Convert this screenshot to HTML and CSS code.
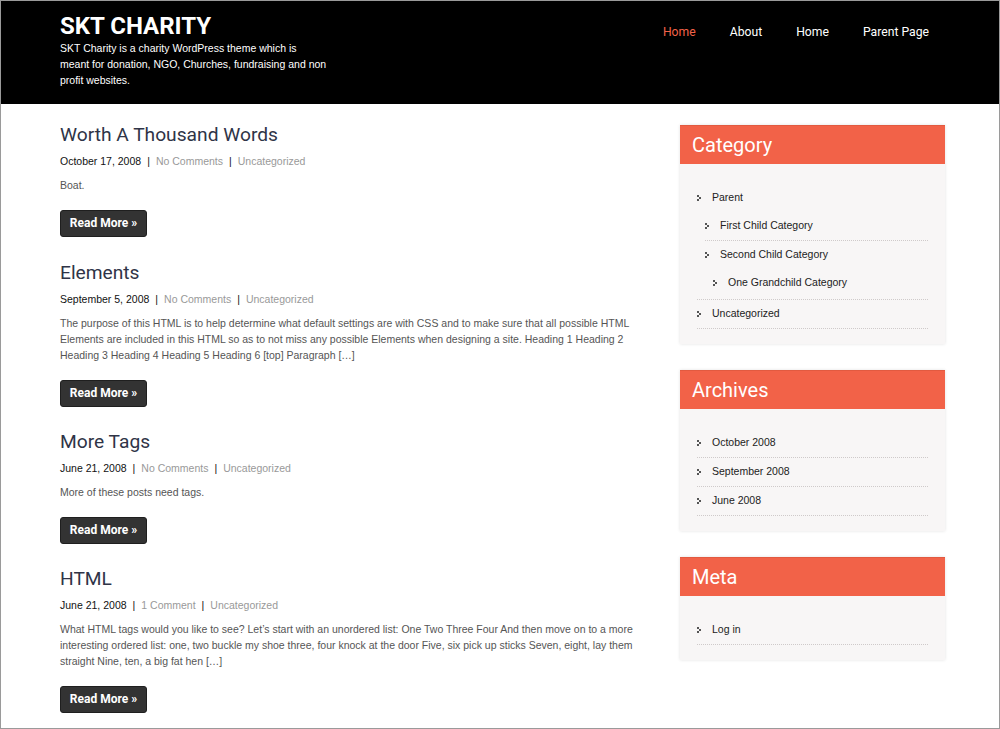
FILE: index.html
```html
<!DOCTYPE html>
<html>
<head>
<meta charset="utf-8">
<title>SKT Charity</title>
<link rel="stylesheet" href="styles.css">
</head>
<body>
<div class="frame">
  <header class="site-header">
    <div class="branding">
      <h1 class="site-title">SKT CHARITY</h1>
      <p class="tagline">SKT Charity is a charity WordPress theme which is meant for donation, NGO, Churches, fundraising and non profit websites.</p>
    </div>
    <nav class="nav">
      <a class="active">Home</a>
      <a>About</a>
      <a>Home</a>
      <a>Parent Page</a>
    </nav>
  </header>

  <div class="content">
    <main class="posts">
      <article class="post">
        <h2 class="post-title">Worth A Thousand Words</h2>
        <div class="meta"><span class="date">October 17, 2008</span><span class="sep">|</span><a>No Comments</a><span class="sep">|</span><a>Uncategorized</a></div>
        <p class="excerpt">Boat.</p>
        <a class="btn">Read More »</a>
      </article>
      <article class="post">
        <h2 class="post-title">Elements</h2>
        <div class="meta"><span class="date">September 5, 2008</span><span class="sep">|</span><a>No Comments</a><span class="sep">|</span><a>Uncategorized</a></div>
        <p class="excerpt">The purpose of this HTML is to help determine what default settings are with CSS and to make sure that all possible HTML Elements are included in this HTML so as to not miss any possible Elements when designing a site. Heading 1 Heading 2 Heading 3 Heading 4 Heading 5 Heading 6 [top] Paragraph […]</p>
        <a class="btn">Read More »</a>
      </article>
      <article class="post">
        <h2 class="post-title">More Tags</h2>
        <div class="meta"><span class="date">June 21, 2008</span><span class="sep">|</span><a>No Comments</a><span class="sep">|</span><a>Uncategorized</a></div>
        <p class="excerpt">More of these posts need tags.</p>
        <a class="btn">Read More »</a>
      </article>
      <article class="post">
        <h2 class="post-title">HTML</h2>
        <div class="meta"><span class="date">June 21, 2008</span><span class="sep">|</span><a>1 Comment</a><span class="sep">|</span><a>Uncategorized</a></div>
        <p class="excerpt">What HTML tags would you like to see? Let’s start with an unordered list: One Two Three Four And then move on to a more interesting ordered list: one, two buckle my shoe three, four knock at the door Five, six pick up sticks Seven, eight, lay them straight Nine, ten, a big fat hen […]</p>
        <a class="btn">Read More »</a>
      </article>
    </main>

    <aside class="sidebar">
      <section class="widget">
        <h3 class="widget-title">Category</h3>
        <ul class="wlist">
          <li><span class="item">Parent</span>
            <ul class="children">
              <li><span class="item">First Child Category</span></li>
              <li><span class="item">Second Child Category</span>
                <ul class="children">
                  <li><span class="item">One Grandchild Category</span></li>
                </ul>
              </li>
            </ul>
          </li>
          <li><span class="item">Uncategorized</span></li>
        </ul>
      </section>
      <section class="widget">
        <h3 class="widget-title">Archives</h3>
        <ul class="wlist">
          <li><span class="item">October 2008</span></li>
          <li><span class="item">September 2008</span></li>
          <li><span class="item">June 2008</span></li>
        </ul>
      </section>
      <section class="widget">
        <h3 class="widget-title">Meta</h3>
        <ul class="wlist">
          <li><span class="item">Log in</span></li>
        </ul>
      </section>
    </aside>
  </div>
</div>
</body>
</html>
```
FILE: styles.css
```css
* { box-sizing: border-box; }
html, body { margin: 0; padding: 0; background: #fff; }
body { font-family: "Liberation Sans", Arial, sans-serif; }

.frame {
  width: 1000px;
  height: 729px;
  border: 1px solid #9a9a9a;
  overflow: hidden;
  background: #fff;
}

.site-header {
  background: #000;
  height: 103px;
  display: flex;
  justify-content: space-between;
  align-items: flex-start;
  padding: 11px 0 0 59px;
}
.site-title {
  margin: 0;
  font-family: Roboto, "Liberation Sans", sans-serif;
  font-weight: 700;
  font-size: 24px;
  line-height: 28px;
  color: #fff;
}
.tagline {
  margin: 0;
  width: 267px;
  color: #fff;
  font-size: 10.5px;
  line-height: 16px;
}
.nav {
  display: flex;
  padding: 11px 70px 0 0;
  font-family: Roboto, "Liberation Sans", sans-serif;
  font-size: 12.2px;
  line-height: 18px;
}
.nav a { color: #fff; margin-left: 34px; }
.nav a:first-child { margin-left: 0; }
.nav a.active { color: #f26248; }

.content {
  display: flex;
  padding: 19px 0 0 59px;
  gap: 35px;
}
.posts { width: 585px; }
.post { margin-bottom: 23px; }
.post:first-child { margin-bottom: 24px; }
.post-title {
  margin: 0;
  font-family: Roboto, "Liberation Sans", sans-serif;
  font-weight: 400;
  font-size: 19.2px;
  line-height: 24px;
  color: #2f3447;
}
.meta {
  margin-top: 6px;
  font-size: 10.5px;
  line-height: 16px;
  color: #111;
}
.meta a { color: #999; }
.meta .sep { margin: 0 6px; color: #111; }
.excerpt {
  margin: 8px 0 0;
  font-size: 10.5px;
  line-height: 16px;
  color: #555;
}
.btn {
  display: inline-block;
  margin-top: 17px;
  height: 27px;
  width: 87px;
  background: #333;
  border: 1px solid #1f1f1f;
  border-radius: 3px;
  color: #fff;
  font-family: Roboto, "Liberation Sans", sans-serif;
  font-weight: 700;
  font-size: 12px;
  line-height: 25px;
  text-align: center;
}

.sidebar {
  width: 265px;
  padding-top: 2px;
}
.widget {
  background: #f8f6f6;
  box-shadow: 0 0 3px rgba(0,0,0,0.12);
  margin-bottom: 26px;
  padding-bottom: 15px;
}
.widget-title {
  margin: 0;
  height: 39px;
  background: #f26248;
  border-top: 1px solid #e25a40;
  color: #fff;
  font-family: Roboto, "Liberation Sans", sans-serif;
  font-weight: 400;
  font-size: 20px;
  line-height: 38px;
  padding-left: 12px;
}
.wlist {
  list-style: none;
  margin: 0;
  padding: 20px 17px 0 17px;
  font-size: 10.5px;
  line-height: 15px;
  color: #222;
}
.wlist li { border-bottom: 1px dotted #cfcaca; }
.item {
  display: block;
  padding: 6px 0 7px 15px;
  position: relative;
}
.item::before {
  content: "";
  position: absolute;
  left: 0;
  top: 11px;
  width: 4px;
  height: 6px;
  background:
    radial-gradient(circle, #555 0.8px, transparent 1.2px) 0 0 / 2px 2px no-repeat,
    radial-gradient(circle, #555 0.8px, transparent 1.2px) 2px 2px / 2px 2px no-repeat,
    radial-gradient(circle, #555 0.8px, transparent 1.2px) 0 4px / 2px 2px no-repeat;
}
.children {
  list-style: none;
  margin: 0;
  padding: 0 0 0 8px;
}
.wlist > li > .children { padding-bottom: 2px; }
.children li:last-child { border-bottom: none; }
```
